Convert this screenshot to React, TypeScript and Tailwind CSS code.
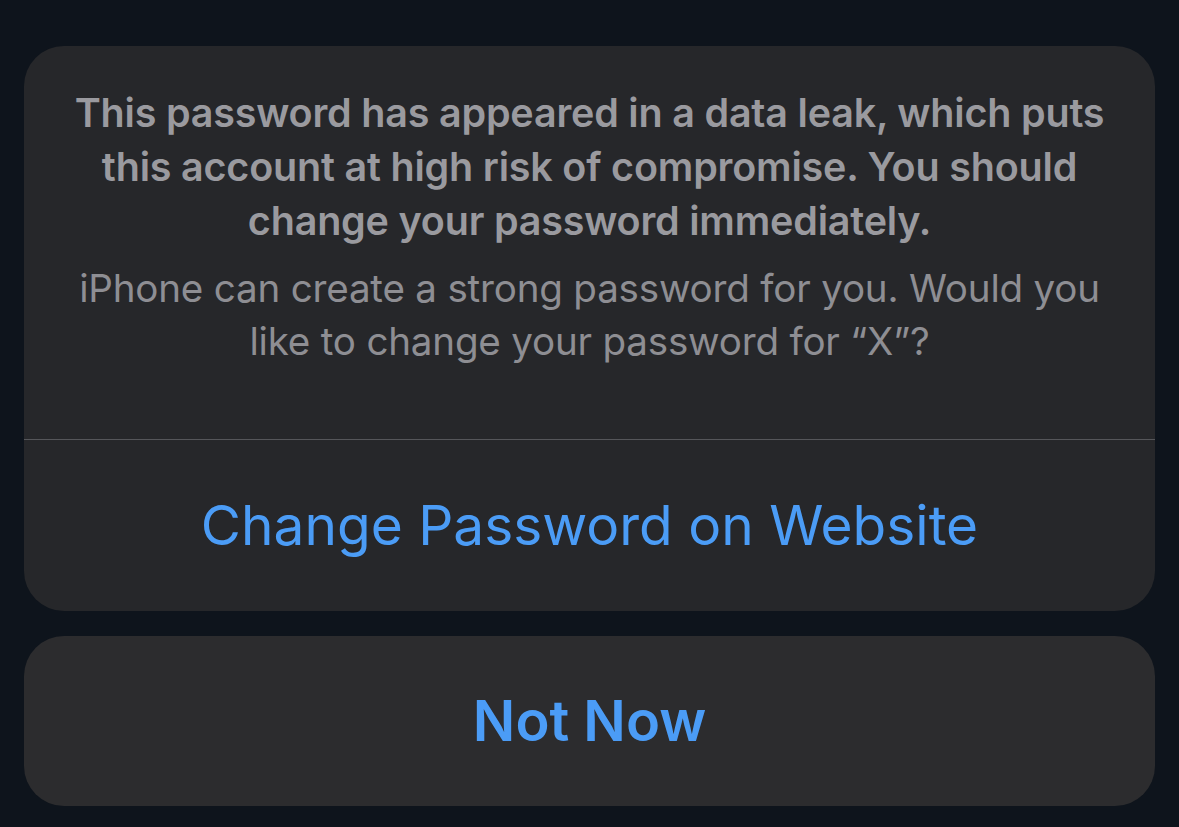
export default function App() {
  return (
    <div
      className="flex h-[827px] w-[1179px] flex-col gap-[25px] bg-[#0e141c] px-[24px] pt-[46px]"
      style={{ fontFamily: 'Inter, "Noto Sans", sans-serif' }}
    >
      <div className="flex flex-col overflow-hidden rounded-[40px] bg-[#26272a]">
        <div className="flex flex-col gap-[14px] px-[46px] pb-[71px] pt-[40px] text-center">
          <p className="text-[39.5px] font-semibold leading-[54px] tracking-[-0.2px] text-[#9a9a9f]">
            This password has appeared in a data leak, which puts this account at high risk of
            compromise. You should change your password immediately.
          </p>
          <p className="text-[38.6px] leading-[53px] tracking-[-0.2px] text-[#8e8e93]">
            iPhone can create a strong password for you. Would you like to change your password for
            “X”?
          </p>
        </div>
        <div className="h-px bg-[#55565a]" />
        <button className="flex h-[171px] items-center justify-center text-[55px] text-[#4b9cf6]">
          Change Password on Website
        </button>
      </div>
      <button className="flex h-[170px] items-center justify-center rounded-[40px] bg-[#2c2c2e] text-[56px] font-semibold text-[#4b9cf6]">
        Not Now
      </button>
    </div>
  );
}
